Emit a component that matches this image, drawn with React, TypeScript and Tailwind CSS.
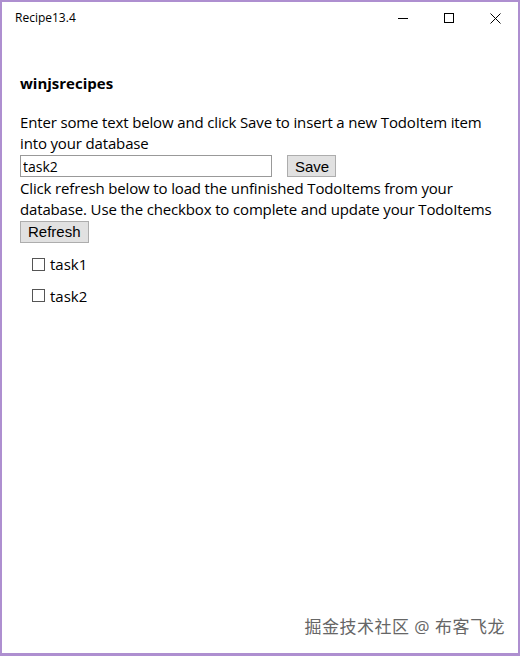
import React from "react";

function TitleBar() {
  return (
    <div className="flex h-[32px] items-center justify-between pl-[13px]">
      <span className="text-[12px] text-black">Recipe13.4</span>
      <div className="flex h-full items-center">
        <div className="flex h-full w-[46px] items-center justify-center">
          <div className="h-px w-[10px] bg-black" />
        </div>
        <div className="flex h-full w-[46px] items-center justify-center">
          <div className="h-[10px] w-[10px] border border-black" />
        </div>
        <div className="flex h-full w-[46px] items-center justify-center">
          <svg width="11" height="11" viewBox="0 0 11 11">
            <path d="M0.5 0.5 L10.5 10.5 M10.5 0.5 L0.5 10.5" stroke="#000" strokeWidth="1" />
          </svg>
        </div>
      </div>
    </div>
  );
}

function TodoRow({ label }: { label: string }) {
  return (
    <label className="flex items-center gap-[5px] pl-[12px]">
      <span className="h-[13px] w-[13px] border border-[#555] bg-white" />
      <span className="text-[15px]">{label}</span>
    </label>
  );
}

export default function App() {
  const btn =
    "h-[22px] border border-[#adadad] bg-[#e1e1e1] px-[7px] text-[15px] leading-none text-black [font-family:'Liberation_Sans',Arial,sans-serif]";

  return (
    <div
      className="flex h-[656px] w-[520px] flex-col border-x-2 border-t-2 border-b-[3px] border-[#ae8fd0] bg-white text-black"
      style={{ fontFamily: "'Open Sans', 'Noto Sans CJK SC', sans-serif" }}
    >
      <TitleBar />
      <div className="flex flex-1 flex-col px-[18px] pt-[39px]">
        <h1 className="text-[15px] font-bold leading-[20px]">winjsrecipes</h1>
        <p className="mt-[19px] text-[15px] leading-[21px] tracking-[-0.15px]">
          Enter some text below and click Save to insert a new TodoItem item into your database
        </p>
        <div className="mt-[1px] mb-[1px] flex items-center gap-[15px]">
          <input
            readOnly
            value="task2"
            className="h-[22px] w-[252px] border border-[#999] px-[2px] text-[14px] outline-none"
          />
          <button className={btn + " w-[49px] px-0"}>Save</button>
        </div>
        <p className="text-[15px] leading-[21px] tracking-[-0.15px]">
          Click refresh below to load the unfinished TodoItems from your database. Use the checkbox to complete and update your TodoItems
        </p>
        <div className="-mt-[1px]">
          <button className={btn}>Refresh</button>
        </div>
        <div className="mt-[10px] flex flex-col gap-[9px]">
          <TodoRow label="task1" />
          <TodoRow label="task2" />
        </div>
        <div className="-mr-[5px] mt-auto flex justify-end pb-[14px]">
          <span className="text-[17px] tracking-[0.5px] text-[#666] [text-shadow:0_0_1px_#fff]">
            掘金技术社区 @ 布客飞龙
          </span>
        </div>
      </div>
    </div>
  );
}
